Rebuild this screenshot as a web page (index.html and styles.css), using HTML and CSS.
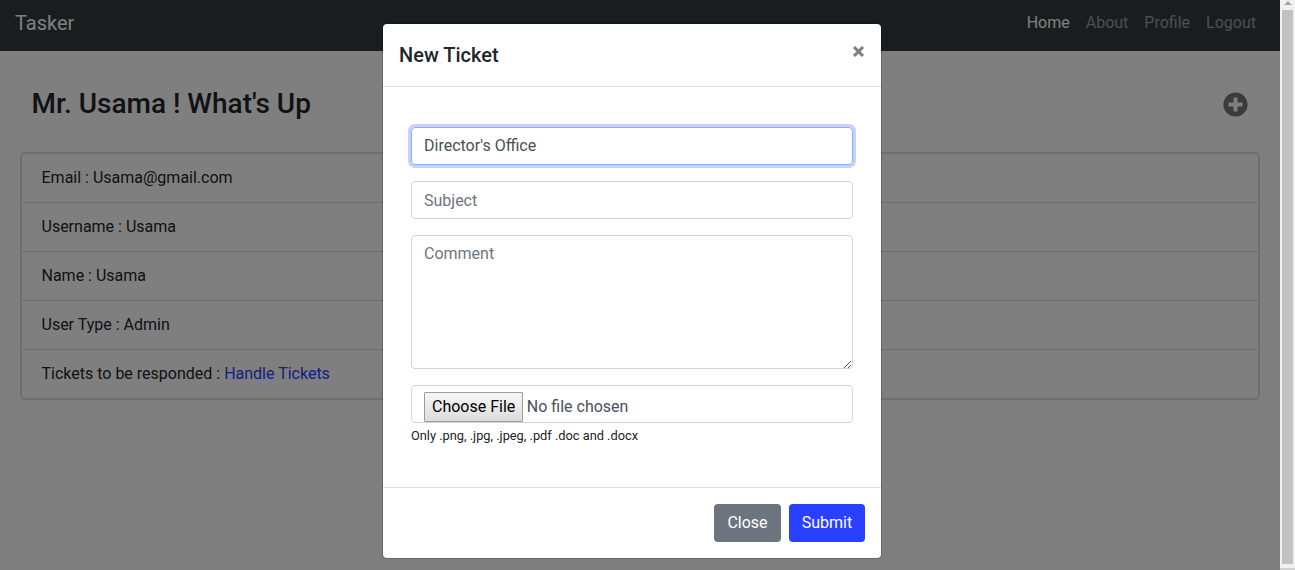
FILE: index.html
```html
<!DOCTYPE html>
<html lang="en">
<head>
<meta charset="utf-8">
<title>Tasker</title>
<link rel="stylesheet" href="styles.css">
</head>
<body>
<div class="page">
  <nav class="navbar">
    <a class="brand">Tasker</a>
    <div class="nav-links">
      <a class="nav-link active">Home</a>
      <a class="nav-link">About</a>
      <a class="nav-link">Profile</a>
      <a class="nav-link">Logout</a>
    </div>
  </nav>
  <main>
    <div class="heading">
      <h3>Mr. Usama ! What's Up</h3>
      <svg class="add" viewBox="0 0 512 512"><path d="M256 8C119 8 8 119 8 256s111 248 248 248 248-111 248-248S393 8 256 8zm144 276c0 6.600-5.400 12-12 12h-92v92c0 6.600-5.400 12-12 12h-56c-6.600 0-12-5.400-12-12v-92h-92c-6.600 0-12-5.400-12-12v-56c0-6.600 5.400-12 12-12h92v-92c0-6.600 5.400-12 12-12h56c6.600 0 12 5.400 12 12v92h92c6.600 0 12 5.400 12 12v56z"/></svg>
    </div>
    <div class="card">
      <ul class="list">
        <li>Email : Usama@gmail.com</li>
        <li>Username : Usama</li>
        <li>Name : Usama</li>
        <li>User Type : Admin</li>
        <li>Tickets to be responded : <a class="link">Handle Tickets</a></li>
      </ul>
    </div>
  </main>
</div>
<div class="scrollbar">
  <div class="arrow"></div>
  <div class="thumb"></div>
  <div class="corner"></div>
</div>
<div class="backdrop">
  <div class="modal">
    <div class="modal-header">
      <h5>New Ticket</h5>
      <svg class="close" viewBox="0 0 13 13"><path d="M2 2l9 9M11 2l-9 9"/></svg>
    </div>
    <div class="modal-body">
      <div class="control focused">Director's Office</div>
      <div class="control placeholder subject">Subject</div>
      <div class="control placeholder comment">Comment
        <svg class="grip" viewBox="0 0 8 8" shape-rendering="crispEdges"><path d="M0 7h1v1H0zM1 6h1v1H1zM2 5h1v1H2zM3 4h1v1H3zM4 3h1v1H4zM5 2h1v1H5zM6 1h1v1H6zM4 7h1v1H4zM5 6h1v1H5zM6 5h1v1H6z"/></svg>
      </div>
      <div class="control file"><span class="choose">Choose File</span><span>No file chosen</span></div>
      <small>Only .png, .jpg, .jpeg, .pdf .doc and .docx</small>
    </div>
    <div class="modal-footer">
      <a class="btn secondary">Close</a>
      <a class="btn primary">Submit</a>
    </div>
  </div>
</div>
</body>
</html>
```

FILE: styles.css
```css
* { box-sizing: border-box; }
body {
  margin: 0;
  height: 570px;
  display: flex;
  overflow: hidden;
  background: #fff;
  color: #212529;
  font: 400 16px/24px Roboto, sans-serif;
}
h3, h5, ul { margin: 0; padding: 0; font-weight: 500; }
.page { width: 1280px; }
.navbar {
  height: 51px;
  padding: 0 16px 5px 15px;
  display: flex;
  align-items: center;
  justify-content: space-between;
  background: #343a40;
}
.brand { color: #fff; font-size: 20px; line-height: 30px; }
.nav-links { display: flex; }
.nav-link { padding: 0 8px; color: rgba(255, 255, 255, .5); }
.nav-link.active { color: #fff; }
main { padding: 0 20px; }
.heading {
  height: 101px;
  padding: 5px 12px 0 11.500px;
  display: flex;
  align-items: center;
  justify-content: space-between;
}
h3 { font-size: 28px; line-height: 34px; }
.add { width: 25px; height: 25px; fill: #777; margin-top: 1px; }
.card { border: 1px solid rgba(0, 0, 0, .125); border-radius: 4px; }
.list { list-style: none; font-weight: 400; }
.list li {
  padding: 12px 19.500px;
  margin-bottom: -1px;
  border: 1px solid rgba(0, 0, 0, .125);
  background: #fff;
  background-clip: padding-box;
}
.list li + li { border-top-color: transparent; }
.list li:first-child { border-radius: 4px 4px 0 0; }
.list li:last-child { margin-bottom: 0; border-radius: 0 0 4px 4px; }
.link { color: #2a40ff; }

.scrollbar {
  width: 15px;
  height: 570px;
  display: flex;
  flex-direction: column;
  align-items: center;
  background: #f1f1f1;
}
.arrow {
  margin: 1px 0 5px;
  border: 4px solid transparent;
  border-top: 0;
  border-bottom-color: #a3a3a3;
}
.thumb { width: 11px; height: 554px; background: #c1c1c1; }
.corner { width: 15px; height: 2px; margin-top: 4px; background: #d1d1d1; }

.backdrop {
  position: absolute;
  inset: 0 15px 0 0;
  padding: 23px 0 0 382px;
  background: rgba(0, 0, 0, .5);
}
.modal {
  width: 500px;
  height: 536px;
  display: flex;
  flex-direction: column;
  background: #fff;
  background-clip: padding-box;
  border: 1px solid rgba(0, 0, 0, .2);
  border-radius: 5px;
}
.modal-header {
  height: 63px;
  padding: 16px;
  display: flex;
  justify-content: space-between;
  border-bottom: 1px solid #dee2e6;
}
h5 { font-size: 20px; line-height: 30px; }
.close { width: 13px; height: 13px; margin: 5px 0 0; stroke: #7f7f7f; stroke-width: 3.1; }
.modal-body {
  height: 400px;
  padding: 40px 28px 0;
  display: flex;
  flex-direction: column;
}
.control {
  height: 38px;
  margin-bottom: 16px;
  padding: 6px 12px;
  border: 1px solid #ced4da;
  border-radius: 4px;
  color: #495057;
}
.focused { border-color: #80b0ff; box-shadow: 0 0 0 3px #cacfff; }
.placeholder { color: #6c757d; }
.subject { padding-top: 7px; }
.comment { position: relative; height: 134px; }
.grip { position: absolute; right: 0; bottom: 0; width: 8px; height: 8px; fill: #555; }
.file { display: flex; gap: 3.500px; margin-bottom: 3px; line-height: 30px; }
.choose {
  height: 30px;
  padding: 0 7px;
  line-height: 28px;
  color: #000;
  background: linear-gradient(#f7f7f7, #dcdcdc);
  border: 1px solid #9c9c9c;
  border-radius: 1px;
}
small { font-size: 12.8px; line-height: 19px; }
.modal-footer {
  height: 71px;
  padding: 16px;
  display: flex;
  justify-content: flex-end;
  gap: 8px;
  border-top: 1px solid #dee2e6;
}
.btn { height: 38px; padding: 7px 0; border-radius: 4px; color: #fff; text-align: center; }
.secondary { width: 67px; background: #6c757d; }
.primary { width: 76px; background: #2a40ff; }
```
